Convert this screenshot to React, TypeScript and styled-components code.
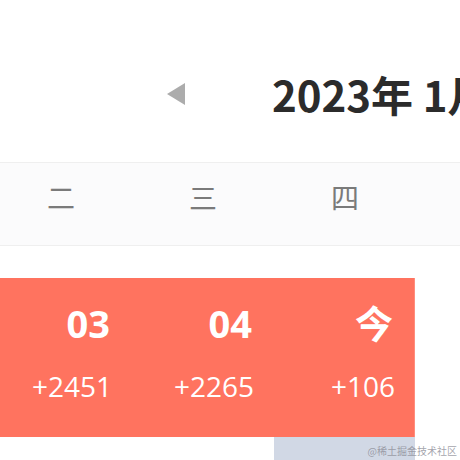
import React from "react";
import styled, { createGlobalStyle } from "styled-components";

const Global = createGlobalStyle`
  html, body { margin: 0; padding: 0; background: #ffffff; }
  body { width: 460px; height: 460px; overflow: hidden; font-family: Roboto, "Noto Sans", "Noto Sans CJK SC", sans-serif; }
  #root { width: 460px; height: 460px; overflow: hidden; position: relative; }
`;

const Page = styled.div`
  width: 460px;
  height: 460px;
  overflow: hidden;
  position: relative;
`;

const Header = styled.div`
  height: 162px;
  box-sizing: border-box;
  padding: 26px 0 0 167px;
  display: flex;
  align-items: center;
  gap: 87px;
  white-space: nowrap;
`;

const Arrow = styled.div`
  width: 0;
  height: 0;
  border-top: 11.5px solid transparent;
  border-bottom: 11.5px solid transparent;
  border-right: 18px solid #acacac;
  flex: none;
`;

const Title = styled.div`
  font-family: "Noto Sans CJK SC", "Noto Sans", sans-serif;
  font-weight: 700;
  font-size: 42px;
  color: #2b2b2b;
  line-height: 1;
`;

const WeekRow = styled.div`
  display: grid;
  grid-template-columns: repeat(3, 142px);
  margin-left: -10px;
  width: 480px;
  height: 84px;
  box-sizing: border-box;
  border-top: 1px solid #efefef;
  border-bottom: 1px solid #efefef;
  background: #fbfbfc;
`;

const WeekDay = styled.div`
  display: flex;
  align-items: center;
  justify-content: center;
  padding-bottom: 14px;
  font-family: "Noto Sans CJK SC", sans-serif;
  font-size: 28px;
  color: #7a7a7a;
`;

const Grid = styled.div`
  margin-top: 32px;
  margin-left: -10px;
  display: grid;
  grid-template-columns: repeat(3, 142px);
`;

const Cell = styled.div<{ $bg: string }>`
  height: 159px;
  background: ${(p) => p.$bg};
  display: flex;
  flex-direction: column;
  align-items: flex-end;
  padding-right: 22px;
  box-sizing: border-box;
  color: #ffffff;
`;

const LastRedCell = styled(Cell)`
  width: 141px;
  border-right: 1px solid #ff8d7d;
  padding-right: 21px;
`;

const DayNum = styled.div`
  margin-top: 24px;
  height: 42px;
  line-height: 42px;
  font-family: "Open Sans", "Noto Sans CJK SC", sans-serif;
  font-weight: 700;
  font-size: 38px;
`;

const Count = styled.div`
  margin-top: 25px;
  margin-right: -2px;
  height: 34px;
  line-height: 34px;
  font-family: "Open Sans", sans-serif;
  font-size: 28px;
  font-weight: 400;
`;

const NextCell = styled.div<{ $bg: string }>`
  height: 40px;
  width: 141px;
  background: ${(p) => p.$bg};
`;

const Watermark = styled.div`
  position: absolute;
  right: 3px;
  bottom: 2px;
  font-family: "Noto Sans CJK SC", sans-serif;
  font-size: 10px;
  color: rgba(140, 140, 150, 0.8);
`;

const days = [
  { d: "03", c: "+2451" },
  { d: "04", c: "+2265" },
];

export default function App() {
  return (
    <Page>
      <Global />
      <Header>
        <Arrow />
        <Title>2023年 1月</Title>
      </Header>
      <WeekRow>
        <WeekDay>二</WeekDay>
        <WeekDay>三</WeekDay>
        <WeekDay>四</WeekDay>
      </WeekRow>
      <Grid>
        {days.map((x) => (
          <Cell key={x.d} $bg="#ff735f">
            <DayNum>{x.d}</DayNum>
            <Count>{x.c}</Count>
          </Cell>
        ))}
        <LastRedCell $bg="#ff735f">
          <DayNum>今</DayNum>
          <Count>+106</Count>
        </LastRedCell>
        <NextCell $bg="transparent" />
        <NextCell $bg="transparent" />
        <NextCell $bg="#d1d8e5" />
      </Grid>
      <Watermark>@稀土掘金技术社区</Watermark>
    </Page>
  );
}
